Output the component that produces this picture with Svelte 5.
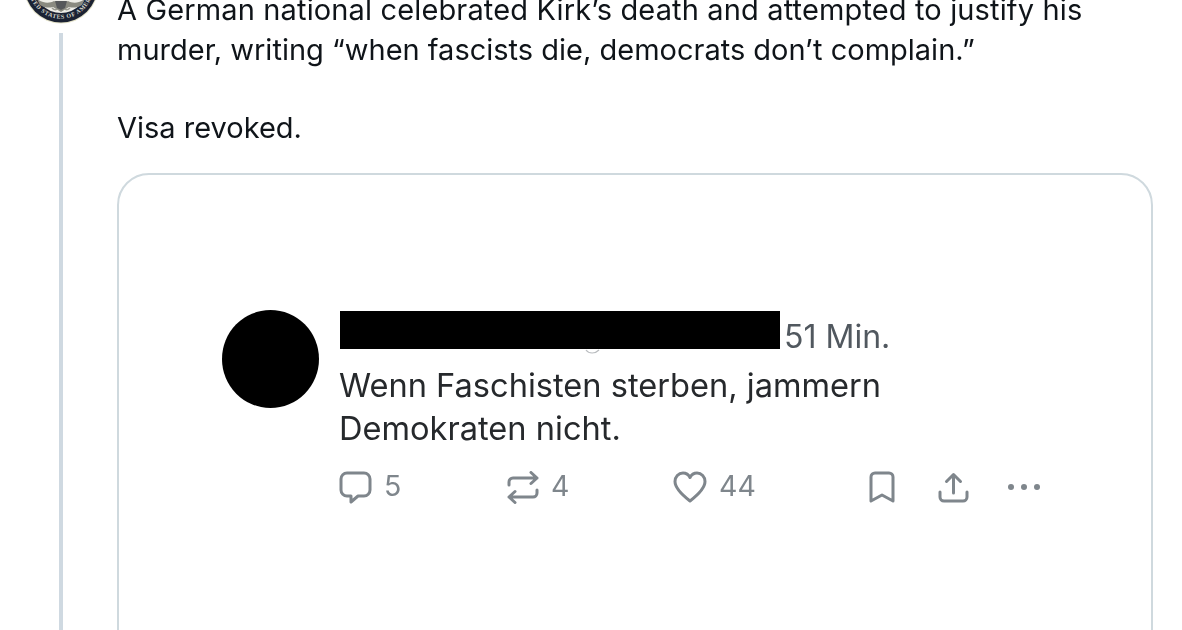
<script>
  const seal = 'UNITED STATES OF AMERICA';
</script>

<div class="page">
  <div class="rail">
    <div class="seal">
      <svg viewBox="0 0 78 24" width="78" height="24" aria-hidden="true">
        <defs>
          <path id="seal-arc" d="M6.300 -14a32.700 32.700 0 0 0 65.400 0" />
        </defs>
        <circle cx="39" cy="-14" r="37.500" fill="#e4e2c8" />
        <circle cx="39" cy="-14" r="36.500" fill="#1b2233" />
        <circle cx="39" cy="-14" r="27" fill="#efeee8" />
        <text class="seal-text"><textPath href="#seal-arc" startOffset="50%" text-anchor="middle">{seal}</textPath></text>
        <path d="M15 -1c7 5 13 4 17 2l7 3 7-3c4 2 10 3 17-2l-3 6c-5 3-9 3-13 2l-8 5-8-5c-4 1-8 1-13-2z" fill="#8a8a80" />
        <path d="M33 1h12l-2 7-4 2-4-2z" fill="#56585a" />
        <path d="M30 8c2 2 4 2 5 1M48 8c-2 2-4 2-5 1" fill="none" stroke="#9a9a90" stroke-width="1.500" />
      </svg>
    </div>
    <div class="line"></div>
  </div>

  <div class="body">
    <p class="tweet"><span class="first">A German national celebrated Kirk’s death and attempted to justify his</span><br />murder, writing “when fascists die, democrats don’t complain.”</p>
    <p class="tweet gap">Visa revoked.</p>

    <div class="card">
      <div class="post">
        <div class="avatar"></div>
        <div class="main">
          <div class="head">
            <div class="redact">
              <svg class="remnant" viewBox="0 0 16 6" width="16" height="6" aria-hidden="true">
                <path d="M1 1c3 4 9 4 13 0" fill="none" stroke="#b9bcbf" stroke-width="1.200" />
              </svg>
            </div>
            <span class="time">51 Min.</span>
          </div>
          <p class="text">Wenn Faschisten sterben, jammern<br />Demokraten nicht.</p>
          <div class="actions">
            <div class="stats">
              <div class="stat reply">
                <svg viewBox="0 0 33 33" width="33" height="33" fill="none" stroke="currentColor" stroke-width="3" stroke-linejoin="round" aria-hidden="true">
                  <path d="M8 2h17a6 6 0 0 1 6 6v11a6 6 0 0 1-6 6h-6l-7 6v-6H8a6 6 0 0 1-6-6V8a6 6 0 0 1 6-6z" />
                </svg>
                <span>5</span>
              </div>
              <div class="stat rt">
                <svg viewBox="0 0 32 33" width="32" height="33" fill="none" stroke="currentColor" stroke-width="3" stroke-linecap="round" stroke-linejoin="round" aria-hidden="true">
                  <path d="M2 14v-3a4 4 0 0 1 4-4h24M24 1.500 30 7l-6 5.500" />
                  <path d="M30 19v3a4 4 0 0 1-4 4H2M8 20.500 2 26l6 5.500" />
                </svg>
                <span>4</span>
              </div>
              <div class="stat like">
                <svg viewBox="0 0 34 32" width="34" height="32" fill="none" stroke="currentColor" stroke-width="3" stroke-linejoin="round" aria-hidden="true">
                  <path d="M17 30C8 23 2 17 2 10.500 2 6 5.500 2 10 2c3 0 5.500 1.500 7 4.500C18.500 3.500 21 2 24 2c4.500 0 8 4 8 8.500C32 17 26 23 17 30z" />
                </svg>
                <span>44</span>
              </div>
            </div>
            <div class="tools">
              <svg class="mark" viewBox="0 0 26 32" width="26" height="32" fill="none" stroke="currentColor" stroke-width="3" stroke-linejoin="round" aria-hidden="true">
                <path d="M6 2h14a4 4 0 0 1 4 4v24l-11-6-11 6V6a4 4 0 0 1 4-4z" />
              </svg>
              <svg class="share" viewBox="0 0 31 31" width="31" height="31" fill="none" stroke="currentColor" stroke-width="3" stroke-linecap="round" stroke-linejoin="round" aria-hidden="true">
                <path d="M15.500 21V3M8.500 9.500l7-7 7 7M2 20v5a4 4 0 0 0 4 4h19a4 4 0 0 0 4-4v-5" />
              </svg>
              <div class="dots"><i></i><i></i><i></i></div>
            </div>
          </div>
        </div>
      </div>
    </div>
  </div>
</div>

<style>
  :global(body) {
    margin: 0;
    background: #fff;
  }

  .page {
    width: 1182px;
    height: 630px;
    overflow: hidden;
    display: flex;
    background: #fff;
    font-family: Inter, "Liberation Sans", sans-serif;
    color: #0f1419;
  }

  .rail {
    width: 117px;
    flex: none;
    display: flex;
    flex-direction: column;
    align-items: flex-start;
  }

  .seal {
    height: 24px;
    margin-left: 22px;
  }

  .seal svg {
    display: block;
    overflow: hidden;
  }

  .seal-text {
    font-family: "Liberation Serif", serif;
    font-size: 6px;
    font-weight: 700;
    letter-spacing: 0.6px;
    fill: #d6d6cc;
  }

  .line {
    width: 4px;
    height: 700px;
    margin: 9px 0 0 59px;
    background: #cfd9e1;
  }

  .body {
    width: 1036px;
    flex: none;
    margin-top: -10px;
  }

  .tweet {
    margin: 0;
    font-size: 29px;
    line-height: 39.500px;
    white-space: nowrap;
    filter: blur(0.25px);
  }

  .first {
    letter-spacing: 0.14px;
  }

  .gap {
    margin-top: 39px;
  }

  .card {
    box-sizing: border-box;
    margin-top: 25px;
    height: 560px;
    border: 2px solid #cfd9de;
    border-radius: 32px;
    padding: 136px 0 0 103px;
  }

  .post {
    display: flex;
    gap: 21px;
    filter: blur(0.4px);
  }

  .avatar {
    width: 97px;
    height: 98px;
    margin-top: -1px;
    border-radius: 50%;
    background: #000;
    flex: none;
  }

  .main {
    width: 720px;
  }

  .head {
    display: flex;
    align-items: flex-start;
    gap: 4px;
  }

  .redact {
    position: relative;
    width: 440px;
    height: 38px;
    background: #000;
  }

  .remnant {
    position: absolute;
    left: 245px;
    top: 38px;
  }

  .time {
    font-size: 32px;
    color: #51585f;
    line-height: 38px;
    margin-top: 7px;
  }

  .text {
    margin: 8px 0 0 -1px;
    font-size: 32.600px;
    line-height: 43px;
    color: #26292c;
    white-space: nowrap;
  }

  .actions {
    display: flex;
    align-items: center;
    margin: 21px 0 0 -1px;
    color: #7f868c;
  }

  .stats {
    display: flex;
    width: 530px;
  }

  .stat {
    display: flex;
    align-items: center;
    gap: 12px;
    font-size: 28.500px;
    line-height: 34px;
  }

  .stat span {
    margin-top: -3px;
  }

  .reply {
    width: 168px;
  }

  .rt {
    width: 166px;
  }

  .tools {
    display: flex;
    align-items: center;
  }

  .mark {
    margin-right: 43px;
  }

  .share {
    margin-right: 39px;
  }

  .dots {
    display: flex;
    gap: 7px;
  }

  .dots i {
    display: block;
    width: 6px;
    height: 6px;
    border-radius: 50%;
    background: #7f868c;
  }
</style>
